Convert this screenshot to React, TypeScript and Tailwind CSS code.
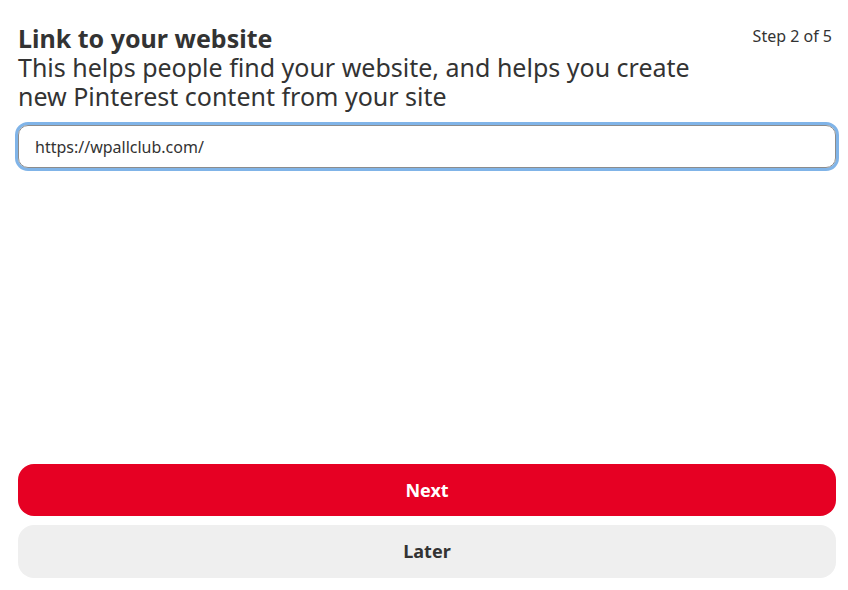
export default function App() {
  return (
    <div
      className="flex h-[590px] w-[848px] flex-col bg-white pl-[18px] pr-[12px] pb-3 text-[#333333]"
      style={{ fontFamily: '"Noto Sans", "Open Sans", sans-serif' }}
    >
      {/* Header */}
      <div className="flex items-start justify-between pt-[24px]">
        <div className="max-w-[690px]">
          <h1 className="text-[25px] font-bold leading-[29px] text-[#333333]">
            Link to your website
          </h1>
          <p className="text-[25px] leading-[29px] text-[#333333]">
            This helps people find your website, and helps you create new Pinterest content from
            your site
          </p>
        </div>
        <span className="pt-[1px] pr-[4px] text-[16px] leading-[22px] text-[#333333]">
          Step 2 of 5
        </span>
      </div>

      {/* Website input */}
      <div className="-mx-[3px] mt-[11px] rounded-[13px] border-[3px] border-[#80b4e8]">
        <div className="flex h-[43px] items-center rounded-[10px] border border-[#8c8c8c] px-4">
          <span className="text-[16px] text-[#333333]">https://wpallclub.com/</span>
        </div>
      </div>

      <div className="flex-1" />

      {/* Actions */}
      <div className="flex flex-col gap-[9px]">
        <button className="flex h-[52px] items-center justify-center rounded-[16px] bg-[#e60023] text-[18px] font-bold text-white">
          Next
        </button>
        <button className="flex h-[53px] items-center justify-center rounded-[16px] bg-[#efefef] text-[18px] font-bold text-[#333333]">
          Later
        </button>
      </div>
    </div>
  );
}
